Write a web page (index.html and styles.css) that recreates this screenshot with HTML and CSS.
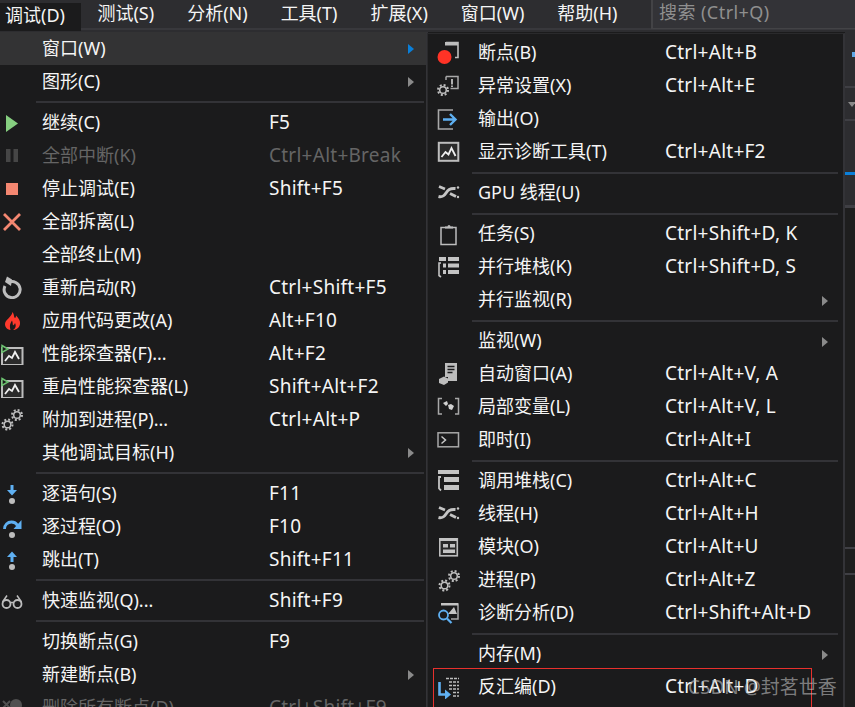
FILE: index.html
```html
<!DOCTYPE html>
<html lang="zh">
<head>
<meta charset="utf-8">
<title>调试菜单</title>
<link rel="stylesheet" href="styles.css">
</head>
<body>
<svg class="defs" width="0" height="0" aria-hidden="true">
  <defs>
    <g id="gear"><circle cx="0" cy="0" r="3.300" fill="none" stroke="#bdbdbd" stroke-width="1.500"/><circle cx="0" cy="0" r="5" fill="none" stroke="#bdbdbd" stroke-width="2" stroke-dasharray="2 1.930"/></g>
    <symbol id="i-gears" viewBox="0 0 24 24"><use href="#gear" x="7.500" y="17.500"/><use href="#gear" x="17" y="8"/></symbol>
    <symbol id="i-perf" viewBox="0 0 24 24"><rect x="2" y="7" width="20.500" height="17" fill="#2a2a2a" stroke="#bdbdbd" stroke-width="2"/><path d="M5 20l4-5 3 2 3-6 4 7" fill="none" stroke="#efefef" stroke-width="1.800"/><path d="M2 4.500l6 3.500-6 3.500z" fill="#1b1b1c" stroke="#6cc070" stroke-width="1.500"/></symbol>
    <symbol id="i-threads" viewBox="0 0 24 24"><path d="M1.500 15.500c4 1 5.500-.5 7.500-3.500s3.500-5 9.500-4.500" fill="none" stroke="#c4c4c4" stroke-width="3"/><path d="M2 5.500l6 2.500M13 12.500l6 3" fill="none" stroke="#c4c4c4" stroke-width="2.800"/><circle cx="21" cy="6.500" r="1.200" fill="#c4c4c4"/><circle cx="21" cy="16" r="1.200" fill="#c4c4c4"/></symbol>
  </defs>
</svg>

<header class="top">
  <nav class="menubar">
    <span class="tab tab-active">调试(D)</span>
    <span class="tab">测试(S)</span>
    <span class="tab">分析(N)</span>
    <span class="tab">工具(T)</span>
    <span class="tab">扩展(X)</span>
    <span class="tab">窗口(W)</span>
    <span class="tab">帮助(H)</span>
    <span class="search">搜索 (Ctrl+Q)</span>
  </nav>
</header>

<div class="backdrop" aria-hidden="true">
  <i class="bd-a"></i><i class="bd-blue"></i><i class="bd-line1"></i><i class="bd-tri"></i><i class="bd-line2"></i><i class="bd-bar"></i><i class="bd-line3"></i><i class="bd-line4"></i><i class="bd-line5"></i>
</div>

<section class="menu main">
  <div class="row cur"><span class="ic"></span><span class="lbl">窗口(W)</span><span class="key"></span><span class="arr"></span></div>
  <div class="row"><span class="ic"></span><span class="lbl">图形(C)</span><span class="key"></span><span class="arr"></span></div>
  <div class="sep"></div>
  <div class="row"><span class="ic"><svg viewBox="0 0 24 24"><path d="M6 5l12 8.500L6 22z" fill="#86cf80"/></svg></span><span class="lbl">继续(C)</span><span class="key">F5</span></div>
  <div class="row off"><span class="ic"><svg viewBox="0 0 24 24"><path d="M6 6h4.500v13H6zM13.500 6H18v13h-4.500z" fill="#464646"/></svg></span><span class="lbl">全部中断(K)</span><span class="key">Ctrl+Alt+Break</span></div>
  <div class="row"><span class="ic"><svg viewBox="0 0 24 24"><rect x="6" y="7" width="12" height="12" fill="#f48771"/></svg></span><span class="lbl">停止调试(E)</span><span class="key">Shift+F5</span></div>
  <div class="row"><span class="ic"><svg viewBox="0 0 24 24"><path d="M4 5l16 16M20 5L4 21" stroke="#f48771" stroke-width="2.800" fill="none"/></svg></span><span class="lbl">全部拆离(L)</span></div>
  <div class="row"><span class="ic"></span><span class="lbl">全部终止(M)</span></div>
  <div class="row"><span class="ic"><svg viewBox="0 0 24 24"><path d="M8.500 7.500A8 8 0 1 1 5 11" fill="none" stroke="#bdbdbd" stroke-width="3"/><path d="M7 1.500l5 3-1 6.500-6-4z" fill="#bdbdbd"/></svg></span><span class="lbl">重新启动(R)</span><span class="key">Ctrl+Shift+F5</span></div>
  <div class="row"><span class="ic"><svg viewBox="0 0 24 24"><path d="M12.500 4c2 3 1 4.500 2.500 6 1-.5 1-2 1-2.500 2.500 2.500 4.500 5.500 4 8.500-.5 3.500-3.500 6-7 6 2.500-1.500 3.500-4 2-7-.5 1.500-1.500 2-2 2.500-.5-1.500 0-3-1-5-1 2-3 4-1.500 9.500-3.500-.5-5.500-3-5.500-6 0-4.500 6.500-6.500 7.500-12z" fill="#ff3a2d"/></svg></span><span class="lbl">应用代码更改(A)</span><span class="key">Alt+F10</span></div>
  <div class="row"><span class="ic"><svg><use href="#i-perf"/></svg></span><span class="lbl">性能探查器(F)...</span><span class="key">Alt+F2</span></div>
  <div class="row"><span class="ic"><svg><use href="#i-perf"/></svg></span><span class="lbl">重启性能探查器(L)</span><span class="key">Shift+Alt+F2</span></div>
  <div class="row"><span class="ic"><svg><use href="#i-gears"/></svg></span><span class="lbl">附加到进程(P)...</span><span class="key">Ctrl+Alt+P</span></div>
  <div class="row"><span class="ic"></span><span class="lbl">其他调试目标(H)</span><span class="key"></span><span class="arr"></span></div>
  <div class="sep"></div>
  <div class="row"><span class="ic"><svg viewBox="0 0 24 24"><path d="M10.500 4h3v5H17l-5 5.500L7 9h3.500z" fill="#5fb0f2"/><circle cx="12" cy="20" r="3" fill="#bdbdbd"/></svg></span><span class="lbl">逐语句(S)</span><span class="key">F11</span></div>
  <div class="row"><span class="ic"><svg viewBox="0 0 24 24"><path d="M4.500 15c0-4 3-7 7-7 3 0 5 1.500 6 3.500" fill="none" stroke="#5fb0f2" stroke-width="2.800"/><path d="M21.500 6v9h-8z" fill="#5fb0f2"/><circle cx="12" cy="21" r="3" fill="#bdbdbd"/></svg></span><span class="lbl">逐过程(O)</span><span class="key">F10</span></div>
  <div class="row"><span class="ic"><svg viewBox="0 0 24 24"><path d="M10.500 15h3v-5H17l-5-5.500L7 10h3.500z" fill="#5fb0f2"/><circle cx="12" cy="20" r="3" fill="#bdbdbd"/></svg></span><span class="lbl">跳出(T)</span><span class="key">Shift+F11</span></div>
  <div class="sep"></div>
  <div class="row"><span class="ic"><svg viewBox="0 0 24 24"><path d="M2.500 14L7 7.500M21.500 14L17 7.500M11 14.500h2" fill="none" stroke="#bdbdbd" stroke-width="1.500"/><circle cx="6.500" cy="16" r="4" fill="none" stroke="#bdbdbd" stroke-width="1.800"/><circle cx="17.500" cy="16" r="4" fill="none" stroke="#bdbdbd" stroke-width="1.800"/></svg></span><span class="lbl">快速监视(Q)...</span><span class="key">Shift+F9</span></div>
  <div class="sep"></div>
  <div class="row"><span class="ic"></span><span class="lbl">切换断点(G)</span><span class="key">F9</span></div>
  <div class="row"><span class="ic"></span><span class="lbl">新建断点(B)</span><span class="key"></span><span class="arr"></span></div>
  <div class="row off"><span class="ic"><svg viewBox="0 0 24 24"><path d="M3 6l7 7M10 6l-7 7" stroke="#505050" stroke-width="2"/><circle cx="16" cy="10" r="6" fill="#505050"/></svg></span><span class="lbl">删除所有断点(D)</span><span class="key">Ctrl+Shift+F9</span></div>
</section>

<section class="menu sub">
  <div class="row"><span class="ic"><svg viewBox="0 0 24 24"><path d="M9 1.500h12v15h-3" fill="none" stroke="#bdbdbd" stroke-width="1.600"/><path d="M8 1h13v3.500H8z" fill="#bdbdbd"/><circle cx="7.500" cy="16" r="7" fill="#ff3326"/></svg></span><span class="lbl">断点(B)</span><span class="key">Ctrl+Alt+B</span></div>
  <div class="row"><span class="ic"><svg viewBox="0 0 24 24"><use href="#gear" x="6" y="16"/><path d="M9 2.500h12v12h-7.500M9 2.500v3.500" fill="none" stroke="#a8a8a8" stroke-width="1.500"/><path d="M14.200 5h1.600v5.500h-1.600zM14.200 11.500h1.600v1.600h-1.600z" fill="#d8d8d8"/></svg></span><span class="lbl">异常设置(X)</span><span class="key">Ctrl+Alt+E</span></div>
  <div class="row"><span class="ic"><svg viewBox="0 0 24 24"><path d="M16 3H1.500v19H16" fill="none" stroke="#a8a8a8" stroke-width="1.600"/><path d="M6 12.500h11M13 7l5.500 5.500L13 18" fill="none" stroke="#5fb0f2" stroke-width="2.400"/></svg></span><span class="lbl">输出(O)</span></div>
  <div class="row"><span class="ic"><svg viewBox="0 0 24 24"><rect x="1.800" y="2.800" width="19.500" height="18" fill="#2b2b2b" stroke="#bdbdbd" stroke-width="2"/><path d="M4.500 17l4-5 3 2.500 3-6.500 4 8" fill="none" stroke="#efefef" stroke-width="1.800"/></svg></span><span class="lbl">显示诊断工具(T)</span><span class="key">Ctrl+Alt+F2</span></div>
  <div class="sep"></div>
  <div class="row"><span class="ic"><svg><use href="#i-threads"/></svg></span><span class="lbl">GPU 线程(U)</span></div>
  <div class="sep"></div>
  <div class="row"><span class="ic"><svg viewBox="0 0 24 24"><path d="M4 5.500h15V22.500H4z" fill="none" stroke="#bdbdbd" stroke-width="1.500"/><path d="M8 6.500V4.500h2.500a1.500 1.500 0 0 1 3 0H16v2z" fill="#bdbdbd"/></svg></span><span class="lbl">任务(S)</span><span class="key">Ctrl+Shift+D, K</span></div>
  <div class="row"><span class="ic"><svg viewBox="0 0 24 24"><path d="M2 2h7v4H2zM11 2h11v4H11zM6 8.500h3v4H6zM11 8.500h11v4H11zM6 15h3v4H6zM11 15h11v4H11z" fill="#c4c4c4"/><path d="M4 8H2v12.500l2 1.500" fill="none" stroke="#c4c4c4" stroke-width="1.600"/></svg></span><span class="lbl">并行堆栈(K)</span><span class="key">Ctrl+Shift+D, S</span></div>
  <div class="row"><span class="ic"></span><span class="lbl">并行监视(R)</span><span class="key"></span><span class="arr"></span></div>
  <div class="sep"></div>
  <div class="row"><span class="ic"></span><span class="lbl">监视(W)</span><span class="key"></span><span class="arr"></span></div>
  <div class="row"><span class="ic"><svg viewBox="0 0 24 24"><path d="M8 1h12v18H11v-4H8z" fill="#bdbdbd"/><path d="M10.500 4.500h7M10.500 7.500h7M10.500 10.500h5" stroke="#1b1b1c" stroke-width="1.300"/><path d="M2 17l5-2.500 4 2v4L7 23l-5-2z" fill="#bdbdbd"/></svg></span><span class="lbl">自动窗口(A)</span><span class="key">Ctrl+Alt+V, A</span></div>
  <div class="row"><span class="ic"><svg viewBox="0 0 24 24"><path d="M5 3.500H1.500v15.500H5M18 3.500h3.500v15.500H18" fill="none" stroke="#a8a8a8" stroke-width="1.500"/><path d="M6 8l4-2 1 3-2 2zM11 10l3-1 3 2-2 4-3-1z" fill="#d0d0d0"/></svg></span><span class="lbl">局部变量(L)</span><span class="key">Ctrl+Alt+V, L</span></div>
  <div class="row"><span class="ic"><svg viewBox="0 0 24 24"><rect x="1" y="4.800" width="20.500" height="14" fill="none" stroke="#a8a8a8" stroke-width="1.500"/><path d="M4.500 8.500l4 3.500-4 3.500" fill="none" stroke="#c8c8c8" stroke-width="1.500"/></svg></span><span class="lbl">即时(I)</span><span class="key">Ctrl+Alt+I</span></div>
  <div class="sep"></div>
  <div class="row"><span class="ic"><svg viewBox="0 0 24 24"><path d="M1 1h21v4H1zM7 8h15v5H7zM7 16h15v5H7z" fill="#c4c4c4"/><path d="M4 8H2v11.500l2 2" fill="none" stroke="#c4c4c4" stroke-width="1.800"/></svg></span><span class="lbl">调用堆栈(C)</span><span class="key">Ctrl+Alt+C</span></div>
  <div class="row"><span class="ic"><svg><use href="#i-threads"/></svg></span><span class="lbl">线程(H)</span><span class="key">Ctrl+Alt+H</span></div>
  <div class="row"><span class="ic"><svg viewBox="0 0 24 24"><rect x="2.800" y="3.800" width="17.500" height="17" fill="#2a2a2a" stroke="#bdbdbd" stroke-width="1.600"/><path d="M3 3h17v3H3zM6 9h5v3.500H6zM13 9h5v3.500h-5zM6 14.500h12V18H6z" fill="#c4c4c4"/></svg></span><span class="lbl">模块(O)</span><span class="key">Ctrl+Alt+U</span></div>
  <div class="row"><span class="ic"><svg><use href="#i-gears"/></svg></span><span class="lbl">进程(P)</span><span class="key">Ctrl+Alt+Z</span></div>
  <div class="row"><span class="ic"><svg viewBox="0 0 24 24"><path d="M4 3h17v15h-7" fill="none" stroke="#a8a8a8" stroke-width="1.500"/><path d="M4 2h17v2.500H4zM11 13l6-7 3 7z" fill="#c4c4c4"/><circle cx="6.500" cy="14" r="4.500" fill="#1b1b1c" stroke="#5fb0f2" stroke-width="1.800"/><path d="M10 17.500l4.500 4.500" stroke="#5fb0f2" stroke-width="2.200"/></svg></span><span class="lbl">诊断分析(D)</span><span class="key">Ctrl+Shift+Alt+D</span></div>
  <div class="sep"></div>
  <div class="row"><span class="ic"></span><span class="lbl">内存(M)</span><span class="key"></span><span class="arr"></span></div>
  <div class="row"><span class="ic"><svg viewBox="0 0 24 24"><path d="M9 3.500h13M12 7h10M12 10.500h10M12 14h10M16 17.500h6M16 21h6" stroke="#bdbdbd" stroke-width="1.300" stroke-dasharray="3 1"/><path d="M2.500 7v12.500h9" fill="none" stroke="#5fb0f2" stroke-width="2.600"/><path d="M8 14.500l6 5-6 5z" fill="#5fb0f2"/></svg></span><span class="lbl">反汇编(D)</span><span class="key">Ctrl+Alt+D</span></div>
</section>

<div class="redbox" aria-hidden="true"></div>
<div class="watermark">CSDN @封茗世香</div>
</body>
</html>
```
FILE: styles.css
```css
* { box-sizing: border-box; }
html, body { margin: 0; height: 707px; overflow: hidden; }
body {
  position: relative;
  background: #1b1b1c;
  color: #f5f5f5;
  font-family: "Noto Sans", "Noto Sans CJK SC", sans-serif;
  font-size: 18px;
  line-height: 24px;
}
.defs { position: absolute; }

.top { height: 32px; background: #2d2d30; }
.menubar {
  display: flex;
  height: 30px;
  border-bottom: 2px solid #38383c;
}
.tab {
  height: 28px;
  padding: 0 16.5px 2px;
  display: flex;
  align-items: center;
  white-space: nowrap;
}
.tab-active {
  margin-top: 3px;
  background: #1b1b1c;
  padding: 0 16px 4px 5px;
  margin-bottom: -3px;
}
.search {
  margin-left: 17px;
  flex: 1;
  height: 29px;
  padding: 0 6px 4px;
  border-left: 2px solid #434346;
  border-bottom: 1px solid #434346;
  background: #333337;
  color: #8f8f8f;
  letter-spacing: .45px;
  display: flex;
  align-items: center;
}

.menu { background: #1b1b1c; }
.main { width: 428px; border-right: 2px solid #333337; }
.sub {
  position: absolute;
  left: 427px;
  top: 33px;
  width: 418px;
  height: 674px;
  padding-top: 3px;
  border-left: 1px solid #2a2a2c;
  border-top: 1px solid #2a2a2c;
  border-right: 2px solid #333337;
}
.row {
  display: grid;
  height: 33px;
  align-items: center;
  white-space: nowrap;
}
.main .row { grid-template-columns: 42px 227px 1fr 18px; }
.sub .row { grid-template-columns: 50px 187px 1fr 21px; }
.cur { background: #333334; }
.off { color: #656565; }
.lbl { padding-bottom: 2px; }
.key { padding-bottom: 2px; font-size: 19px; letter-spacing: .25px; }
.sub .lbl, .sub .key { padding-bottom: 4px; }
.ic { display: flex; height: 24px; align-self: start; margin-top: 4px; }
.ic svg { width: 24px; height: 24px; display: block; }
.sub .ic { padding-left: 9px; }
.arr {
  width: 0;
  height: 0;
  border-style: solid;
  border-width: 5px 0 5px 6px;
  border-color: transparent transparent transparent #8a8a8a;
}
.cur .arr { border-left-color: #0a7fd9; }
.sep { height: 8px; padding-top: 3px; }
.sep::before { content: ""; display: block; height: 2px; background: #333337; }
.main .sep { margin: 0 2px 0 36px; }
.sub .sep { margin: 0 5px 0 44px; }

.backdrop {
  position: absolute;
  left: 845px;
  top: 32px;
  width: 10px;
  height: 675px;
  background: linear-gradient(#2d2d30 176px, #1e1e1e 176px);
  display: flex;
  flex-direction: column;
}
.backdrop i { display: block; flex: none; }
.bd-a { height: 20px; }
.bd-blue { width: 3px; height: 5px; margin-left: 7px; background: #5fa8e6; }
.bd-line1 { height: 2px; margin-top: 29px; background: #3f3f44; }
.bd-tri {
  width: 0;
  height: 0;
  margin: 14px 0 0 3px;
  border-style: solid;
  border-width: 5px 4px 0 4px;
  border-color: #8a8a8a transparent transparent transparent;
}
.bd-line2 { height: 2px; margin-top: 12px; background: #3f3f44; }
.bd-bar { height: 3px; margin-top: 51px; background: #0a7fd9; }
.bd-line3 { height: 3px; margin-top: 30px; background: #3f3f44; }
.bd-line4 { height: 2px; margin-top: 339px; background: #3f3f44; }
.bd-line5 { height: 2px; margin-top: 24px; background: #3f3f44; }

.redbox {
  position: absolute;
  left: 433px;
  top: 668px;
  width: 379px;
  height: 60px;
  border: 1px solid #e8312d;
}
.watermark {
  position: absolute;
  left: 688px;
  top: 674px;
  font-size: 19px;
  line-height: 26px;
  color: rgba(190, 190, 190, 0.62);
  white-space: nowrap;
}
```
